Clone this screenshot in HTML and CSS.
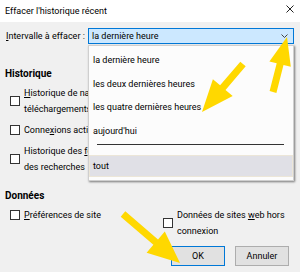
FILE: index.html
```html
<!DOCTYPE html>
<html lang="fr">
<head>
    <meta charset="UTF-8">
    <meta name="viewport" content="width=device-width, initial-scale=1.0">
    <title>Effacer l'historique récent</title>
    <link rel="stylesheet" href="styles.css">
</head>
<body>
    <div class="window">
        <div class="titlebar">
            <span class="title">Effacer l'historique récent</span>
            <svg class="close" width="8" height="8" viewBox="0 0 8 8">
                <path d="M0.5 0.5 L7.5 7.5 M7.5 0.5 L0.5 7.5" stroke="#222" stroke-width="1" fill="none"/>
            </svg>
        </div>

        <div class="content">
            <div class="interval-row">
                <div class="interval-label"><u>I</u>ntervalle à effacer :</div>
                <div class="select">
                    <span>la dernière heure</span>
                    <svg class="chevron" width="7" height="4" viewBox="0 0 7 4">
                        <path d="M0.5 0.5 L3.5 3.5 L6.5 0.5" stroke="#444" stroke-width="1" fill="none"/>
                    </svg>
                </div>
            </div>

            <div class="group-title">Historique</div>
            <div class="options">
                <div class="col">
                    <div class="check"><span class="box"></span><span><u>H</u>istorique de navigation et des téléchargements</span></div>
                    <div class="check"><span class="box"></span><span>Conne<u>x</u>ions actives</span></div>
                    <div class="check"><span class="box"></span><span>Historique des <u>f</u>ormulaires et des recherches</span></div>
                </div>
            </div>

            <div class="group-title data-title">Données</div>
            <div class="options">
                <div class="col">
                    <div class="check"><span class="box"></span><span><u>P</u>références de site</span></div>
                </div>
                <div class="col">
                    <div class="check"><span class="box"></span><span>Données de sites <u>w</u>eb hors connexion</span></div>
                </div>
            </div>

            <div class="buttons">
                <button class="btn btn-default">OK</button>
                <button class="btn">Annuler</button>
            </div>
        </div>

        <div class="dropdown">
            <div class="item">la dernière heure</div>
            <div class="item">les deux dernières heures</div>
            <div class="item">les quatre dernières heures</div>
            <div class="item">aujourd'hui</div>
            <div class="separator"></div>
            <div class="item active">tout</div>
        </div>

        <!-- yellow annotation arrows -->
        <svg class="arrows" width="300" height="272" viewBox="0 0 300 272">
            <polygon fill="#ffd800" points="287,37 290.8,66.8 283.5,65 276.4,92.9 269.6,91.1 276.7,63.2 269.4,61.4"/>
            <polygon fill="#ffd800" points="202,112 212.9,79.2 220.1,85.3 240.3,61.7 245.7,66.3 225.5,89.9 232.7,96.1"/>
            <polygon fill="#ffd800" points="180,263 164.8,231.5 158,239.4 125.3,211.3 120.7,216.7 153.4,244.8 146.6,252.7"/>
        </svg>
    </div>
</body>
</html>
```

FILE: styles.css
```css
body {
    margin: 0;
    background-color: #f0f0f0;
    font-family: Roboto, "Noto Sans", sans-serif;
    font-size: 9px;
    line-height: 16px;
    color: #000;
}
.window {
    position: relative;
    width: 300px;
    height: 272px;
    overflow: hidden;
}
.titlebar {
    height: 22px;
    background-color: #fff;
    display: flex;
    align-items: center;
    justify-content: space-between;
    padding: 0 6px 0 5px;
}
.title {
    margin-top: -1px;
}
.close {
    margin-top: -4px;
}
.content {
    padding: 6px 6px 0 6px;
}
.interval-row {
    display: flex;
    align-items: center;
}
.interval-label {
    width: 82px;
    white-space: nowrap;
}
.select {
    flex: 1;
    height: 14px;
    background-color: #cce8ff;
    border: 1px solid #0078d7;
    display: flex;
    align-items: center;
    justify-content: space-between;
    padding: 0 5px 0 3px;
}
.group-title {
    font-weight: bold;
    font-size: 10px;
    margin-top: 22px;
    margin-left: -1px;
}
.data-title {
    margin-top: 13px;
}
.options {
    display: grid;
    grid-template-columns: 153px 1fr;
    padding-left: 4px;
    margin-top: 3px;
}
.col {
    display: flex;
    flex-direction: column;
    gap: 5px;
}
.check {
    display: flex;
    align-items: center;
    gap: 4px;
    padding-right: 8px;
}
.box {
    flex: none;
    width: 8px;
    height: 8px;
    border: 1px solid #333;
    background-color: #fff;
}
.buttons {
    display: flex;
    justify-content: flex-end;
    gap: 10px;
    margin-top: 7px;
    padding-right: 5px;
}
.btn {
    width: 54px;
    height: 20px;
    font-family: Roboto, "Noto Sans", sans-serif;
    font-size: 9px;
    color: #000;
    background-color: #e1e1e1;
    border: 1px solid #adadad;
    padding: 0;
}
.btn-default {
    border-color: #0078d7;
}
.dropdown {
    position: absolute;
    left: 88px;
    top: 45px;
    width: 204px;
    padding: 3px 0;
    background-color: #fcfcfc;
    border: 1px solid #cfcfcf;
    box-shadow: 1px 1px 2px rgba(0, 0, 0, 0.5);
}
.item {
    height: 23.5px;
    line-height: 23.5px;
    padding-left: 4px;
}
.separator {
    height: 1px;
    background-color: #333;
    margin: 1px 9px 10px 8px;
}
.item.active {
    height: 22px;
    line-height: 22px;
    background-color: #e0e0e6;
    box-shadow: inset 0 0 0 1px #ece6d8;
}
.arrows {
    position: absolute;
    left: 0;
    top: 0;
    pointer-events: none;
}
```
